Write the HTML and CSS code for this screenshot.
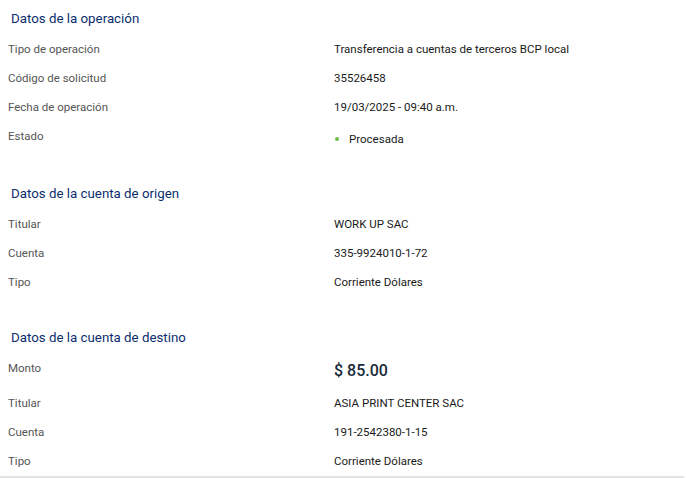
FILE: index.html
```html
<!DOCTYPE html>
<html lang="es">
<head>
    <meta charset="UTF-8">
    <meta name="viewport" content="width=device-width, initial-scale=1.0">
    <title>Detalle de operación</title>
    <link rel="stylesheet" href="styles.css">
</head>
<body>
    <div class="detail">
        <section class="block first">
            <h2>Datos de la operación</h2>
            <div class="row"><span class="label">Tipo de operación</span><span class="value">Transferencia a cuentas de terceros BCP local</span></div>
            <div class="row"><span class="label">Código de solicitud</span><span class="value">35526458</span></div>
            <div class="row"><span class="label">Fecha de operación</span><span class="value">19/03/2025 - 09:40 a.m.</span></div>
            <div class="row"><span class="label">Estado</span><span class="value status"><i class="dot"></i>Procesada</span></div>
        </section>
        <section class="block">
            <h2>Datos de la cuenta de origen</h2>
            <div class="row"><span class="label">Titular</span><span class="value">WORK UP SAC</span></div>
            <div class="row"><span class="label">Cuenta</span><span class="value">335-9924010-1-72</span></div>
            <div class="row"><span class="label">Tipo</span><span class="value">Corriente Dólares</span></div>
        </section>
        <section class="block last">
            <h2>Datos de la cuenta de destino</h2>
            <div class="row amount-row"><span class="label">Monto</span><span class="value amount">$ 85.00</span></div>
            <div class="row"><span class="label">Titular</span><span class="value">ASIA PRINT CENTER SAC</span></div>
            <div class="row"><span class="label">Cuenta</span><span class="value">191-2542380-1-15</span></div>
            <div class="row"><span class="label">Tipo</span><span class="value">Corriente Dólares</span></div>
        </section>
    </div>
</body>
</html>
```

FILE: styles.css
```css
body {
    margin: 0;
    padding: 0;
    background: #fff;
    font-family: Roboto, "Liberation Sans", sans-serif;
    color: #333;
}
.detail {
    width: 684px;
    border-bottom: 2px solid #e2e4e4;
}
.block {
    padding: 10px 0 15px 0;
}
.block.first {
    padding-bottom: 17px;
}
.block.last {
    padding-bottom: 0;
}
.block.last .row:last-child {
    height: 22px;
}
.block h2 {
    margin: 0 0 14px 11px;
    font-size: 13.3px;
    font-weight: 400;
    color: #0c2d6e;
    line-height: 18px;
}
.row {
    display: flex;
    align-items: flex-start;
    height: 29px;
    font-size: 11.5px;
    line-height: 14px;
}
.label {
    width: 326px;
    padding-left: 8px;
    color: #555;
}
.value {
    color: #1a1a1a;
}
.status {
    display: flex;
    align-items: center;
    padding-top: 3px;
}
.dot {
    width: 4px;
    height: 4px;
    border-radius: 50%;
    background: #6cc04a;
    margin: 0 10px 0 1px;
}
.amount-row {
    height: 35px;
}
.amount {
    font-size: 16px;
    line-height: 20px;
    color: #1d2a3a;
    font-weight: 500;
}
```
